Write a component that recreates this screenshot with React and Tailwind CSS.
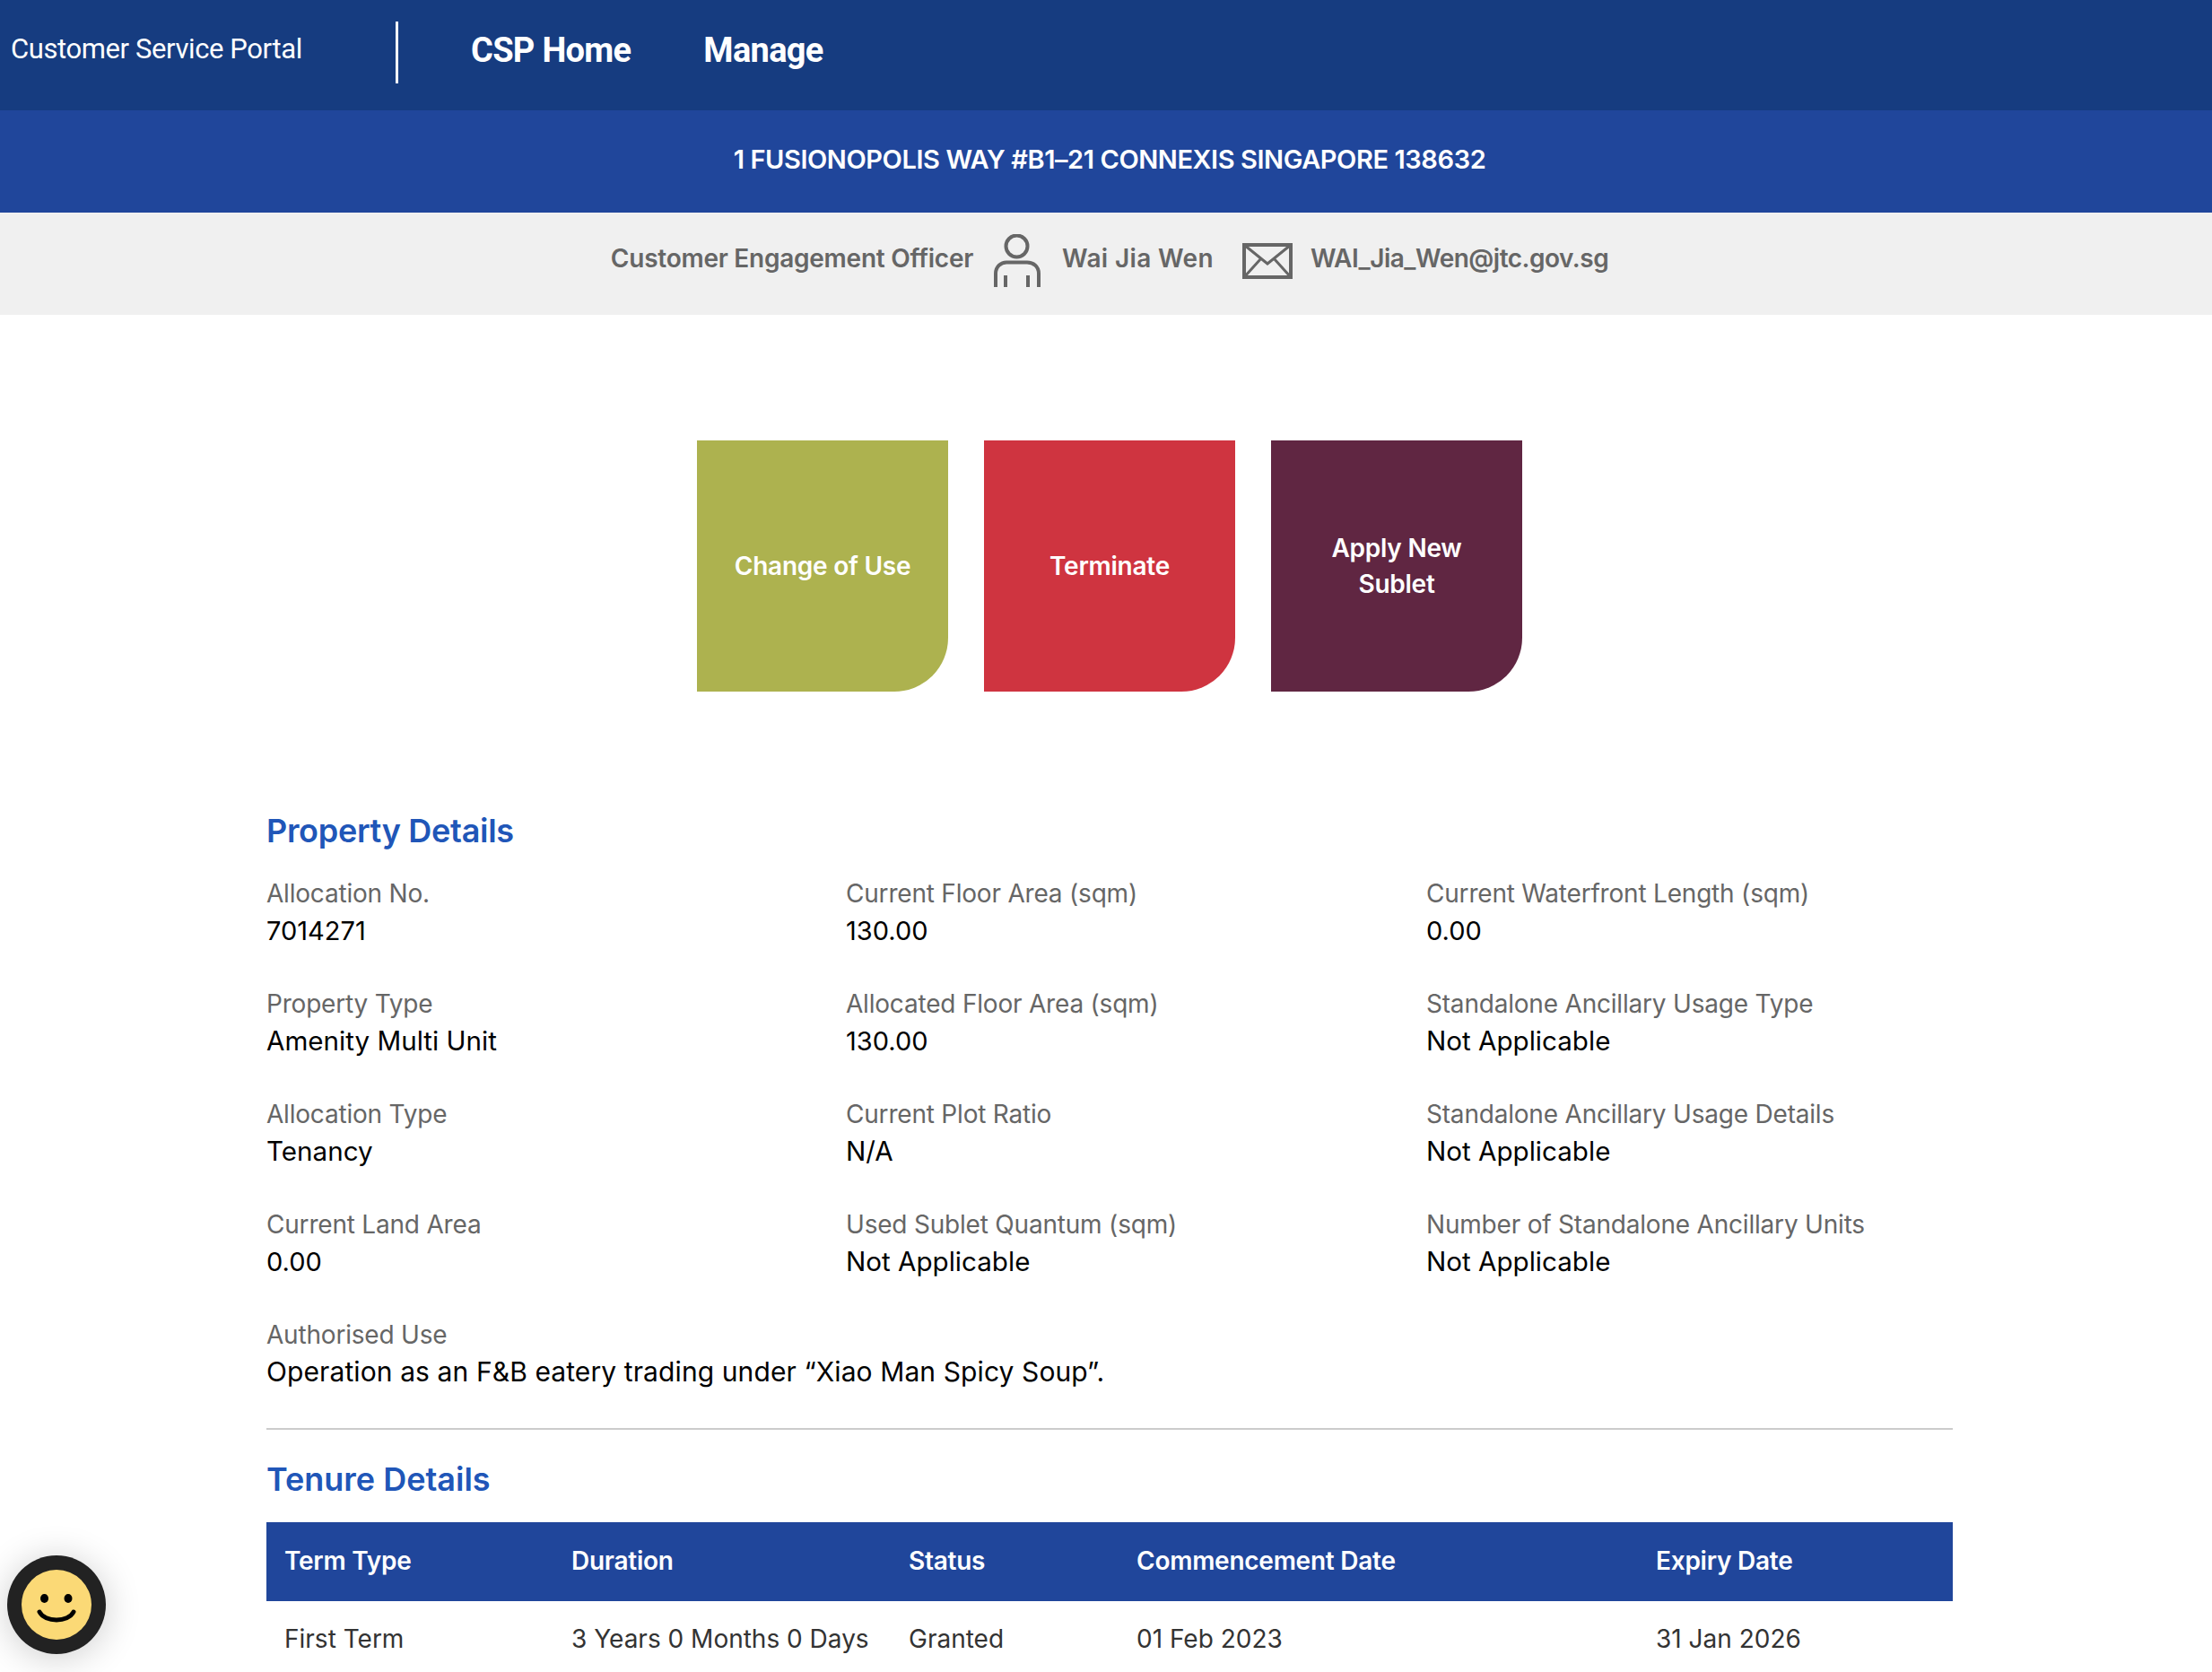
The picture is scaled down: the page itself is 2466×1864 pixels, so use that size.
import React from 'react';

const fields = [
  ['Allocation No.', '7014271'],
  ['Current Floor Area (sqm)', '130.00'],
  ['Current Waterfront Length (sqm)', '0.00'],
  ['Property Type', 'Amenity Multi Unit'],
  ['Allocated Floor Area (sqm)', '130.00'],
  ['Standalone Ancillary Usage Type', 'Not Applicable'],
  ['Allocation Type', 'Tenancy'],
  ['Current Plot Ratio', 'N/A'],
  ['Standalone Ancillary Usage Details', 'Not Applicable'],
  ['Current Land Area', '0.00'],
  ['Used Sublet Quantum (sqm)', 'Not Applicable'],
  ['Number of Standalone Ancillary Units', 'Not Applicable'],
];

const Field = ({ label, value }) => (
  <div className="mb-[41px]">
    <div className="text-[28px] leading-[41px] tracking-[-0.2px] text-[#666666]">{label}</div>
    <div className={/^[\d.]+$/.test(value) ? 'text-[29px] leading-[41px] text-black' : 'text-[29.6px] leading-[41px] text-black'}>{value}</div>
  </div>
);

const PersonIcon = () => (
  <svg width="52" height="60" viewBox="0 0 52 60" fill="none" stroke="#666666" strokeWidth="4">
    <circle cx="25.5" cy="13.5" r="12" />
    <path d="M2 59V44C2 36 8 31.5 14 31.5H37C44 31.5 50 36 50 44V59" />
    <path d="M13 46V59M38 46V59" />
  </svg>
);

const MailIcon = () => (
  <svg width="56" height="40" viewBox="0 0 56 40" fill="none" stroke="#666666" strokeWidth="4">
    <rect x="2" y="2" width="52" height="36" />
    <path d="M2 2L28 23L54 2M2 38L21 17M54 38L35 17" strokeWidth="3" />
  </svg>
);

export default function App() {
  return (
    <div className="relative h-[1864px] overflow-hidden bg-white font-['Inter','Liberation_Sans',sans-serif]">
      {/* top nav */}
      <div className="flex h-[123px] items-start bg-[#163c80] font-['Roboto',sans-serif] text-white">
        <div className="w-[441px] pl-3 pt-[32px] text-[31px] leading-[46px] tracking-[-0.4px]">Customer Service Portal</div>
        <div className="mt-[24px] h-[69px] w-[3px] bg-white"></div>
        <div className="ml-[81px] flex gap-[81px] pt-[31px] text-[38px] font-bold leading-[50px] tracking-[-0.7px]">
          <span>CSP Home</span>
          <span>Manage</span>
        </div>
      </div>

      {/* address */}
      <div className="flex h-[114px] items-center justify-center bg-[#20469b] pb-[4px] pl-2 text-[29px] font-semibold tracking-[-0.42px] text-white">
        1 FUSIONOPOLIS WAY #B1–21 CONNEXIS SINGAPORE 138632
      </div>

      {/* officer */}
      <div className="flex h-[114px] items-center justify-center bg-[#f0f0f0] pb-[12px] pl-2 text-[28px] font-semibold text-[#666666]">
        <span className="tracking-[-0.25px]">Customer Engagement Officer</span>
        <span className="ml-[23px] mt-[6px]"><PersonIcon /></span>
        <span className="ml-6 tracking-[0.35px]">Wai Jia Wen</span>
        <span className="ml-[32px] mt-[6px]"><MailIcon /></span>
        <span className="ml-5 tracking-[-0.5px]">WAI_Jia_Wen@jtc.gov.sg</span>
      </div>

      {/* actions */}
      <div className="flex justify-center gap-10 pl-2 pt-[140px] text-[28px] font-semibold leading-[40px] tracking-[-0.25px] text-white">
        <div className="flex h-[280px] w-[280px] items-center justify-center rounded-br-[60px] bg-[#adb24f] text-center">Change of Use</div>
        <div className="flex h-[280px] w-[280px] items-center justify-center rounded-br-[60px] bg-[#cf3440] text-center">Terminate</div>
        <div className="flex h-[280px] w-[280px] items-center justify-center rounded-br-[60px] bg-[#602642] px-10 text-center">Apply New Sublet</div>
      </div>

      <div className="ml-[297px] w-[1880px] pt-[128px]">
        <h2 className="mb-[23px] text-[36px] font-semibold leading-[54px] tracking-[-0.3px] text-[#2056b8]">Property Details</h2>
        <div className="grid grid-cols-[646px_647px_1fr]">
          {fields.map(([label, value]) => (
            <Field key={label} label={label} value={value} />
          ))}
        </div>
        <div className="text-[28px] leading-[41px] tracking-[-0.2px] text-[#666666]">Authorised Use</div>
        <div className="text-[30px] leading-[41px] tracking-[0.1px] text-black">Operation as an F&amp;B eatery trading under “Xiao Man Spicy Soup”.</div>
        <div className="mt-[42px] h-[2px] bg-[#cccccc]"></div>
        <h2 className="mt-[30px] mb-[23px] text-[36px] font-semibold leading-[50px] text-[#2056b8]">Tenure Details</h2>
        <table className="w-full table-fixed border-collapse text-left text-[28px]">
          <thead>
            <tr className="h-[88px] bg-[#20469b] text-white">
              <th className="w-[320px] pb-[2px] pl-5 font-semibold tracking-[-0.25px]">Term Type</th>
              <th className="w-[376px] pb-[2px] pl-5 font-semibold tracking-[-0.25px]">Duration</th>
              <th className="w-[254px] pb-[2px] pl-5 font-semibold tracking-[-0.25px]">Status</th>
              <th className="w-[579px] pb-[2px] pl-5 font-semibold tracking-[-0.25px]">Commencement Date</th>
              <th className="pb-[2px] pl-5 font-semibold tracking-[-0.25px]">Expiry Date</th>
            </tr>
          </thead>
          <tbody>
            <tr className="h-[84px] text-[#333333]">
              <td className="pl-5">First Term</td>
              <td className="pl-5">3 Years 0 Months 0 Days</td>
              <td className="pl-5">Granted</td>
              <td className="pl-5">01 Feb 2023</td>
              <td className="pl-5">31 Jan 2026</td>
            </tr>
          </tbody>
        </table>
      </div>

      {/* feedback widget */}
      <div className="absolute left-[8px] top-[1734px] flex h-[110px] w-[110px] items-center justify-center rounded-full bg-[#222222] shadow-[0_4px_40px_rgba(0,0,0,0.2)]">
        <svg width="78" height="78" viewBox="0 0 78 78">
          <circle cx="39" cy="39" r="39" fill="#fbd976" />
          <ellipse cx="25.5" cy="32" rx="4.5" ry="5" fill="#000" />
          <ellipse cx="52" cy="32" rx="4.5" ry="5" fill="#000" />
          <path d="M20 47C26 59 52 59 58 47" fill="none" stroke="#000" strokeWidth="5" strokeLinecap="round" />
        </svg>
      </div>
    </div>
  );
}
